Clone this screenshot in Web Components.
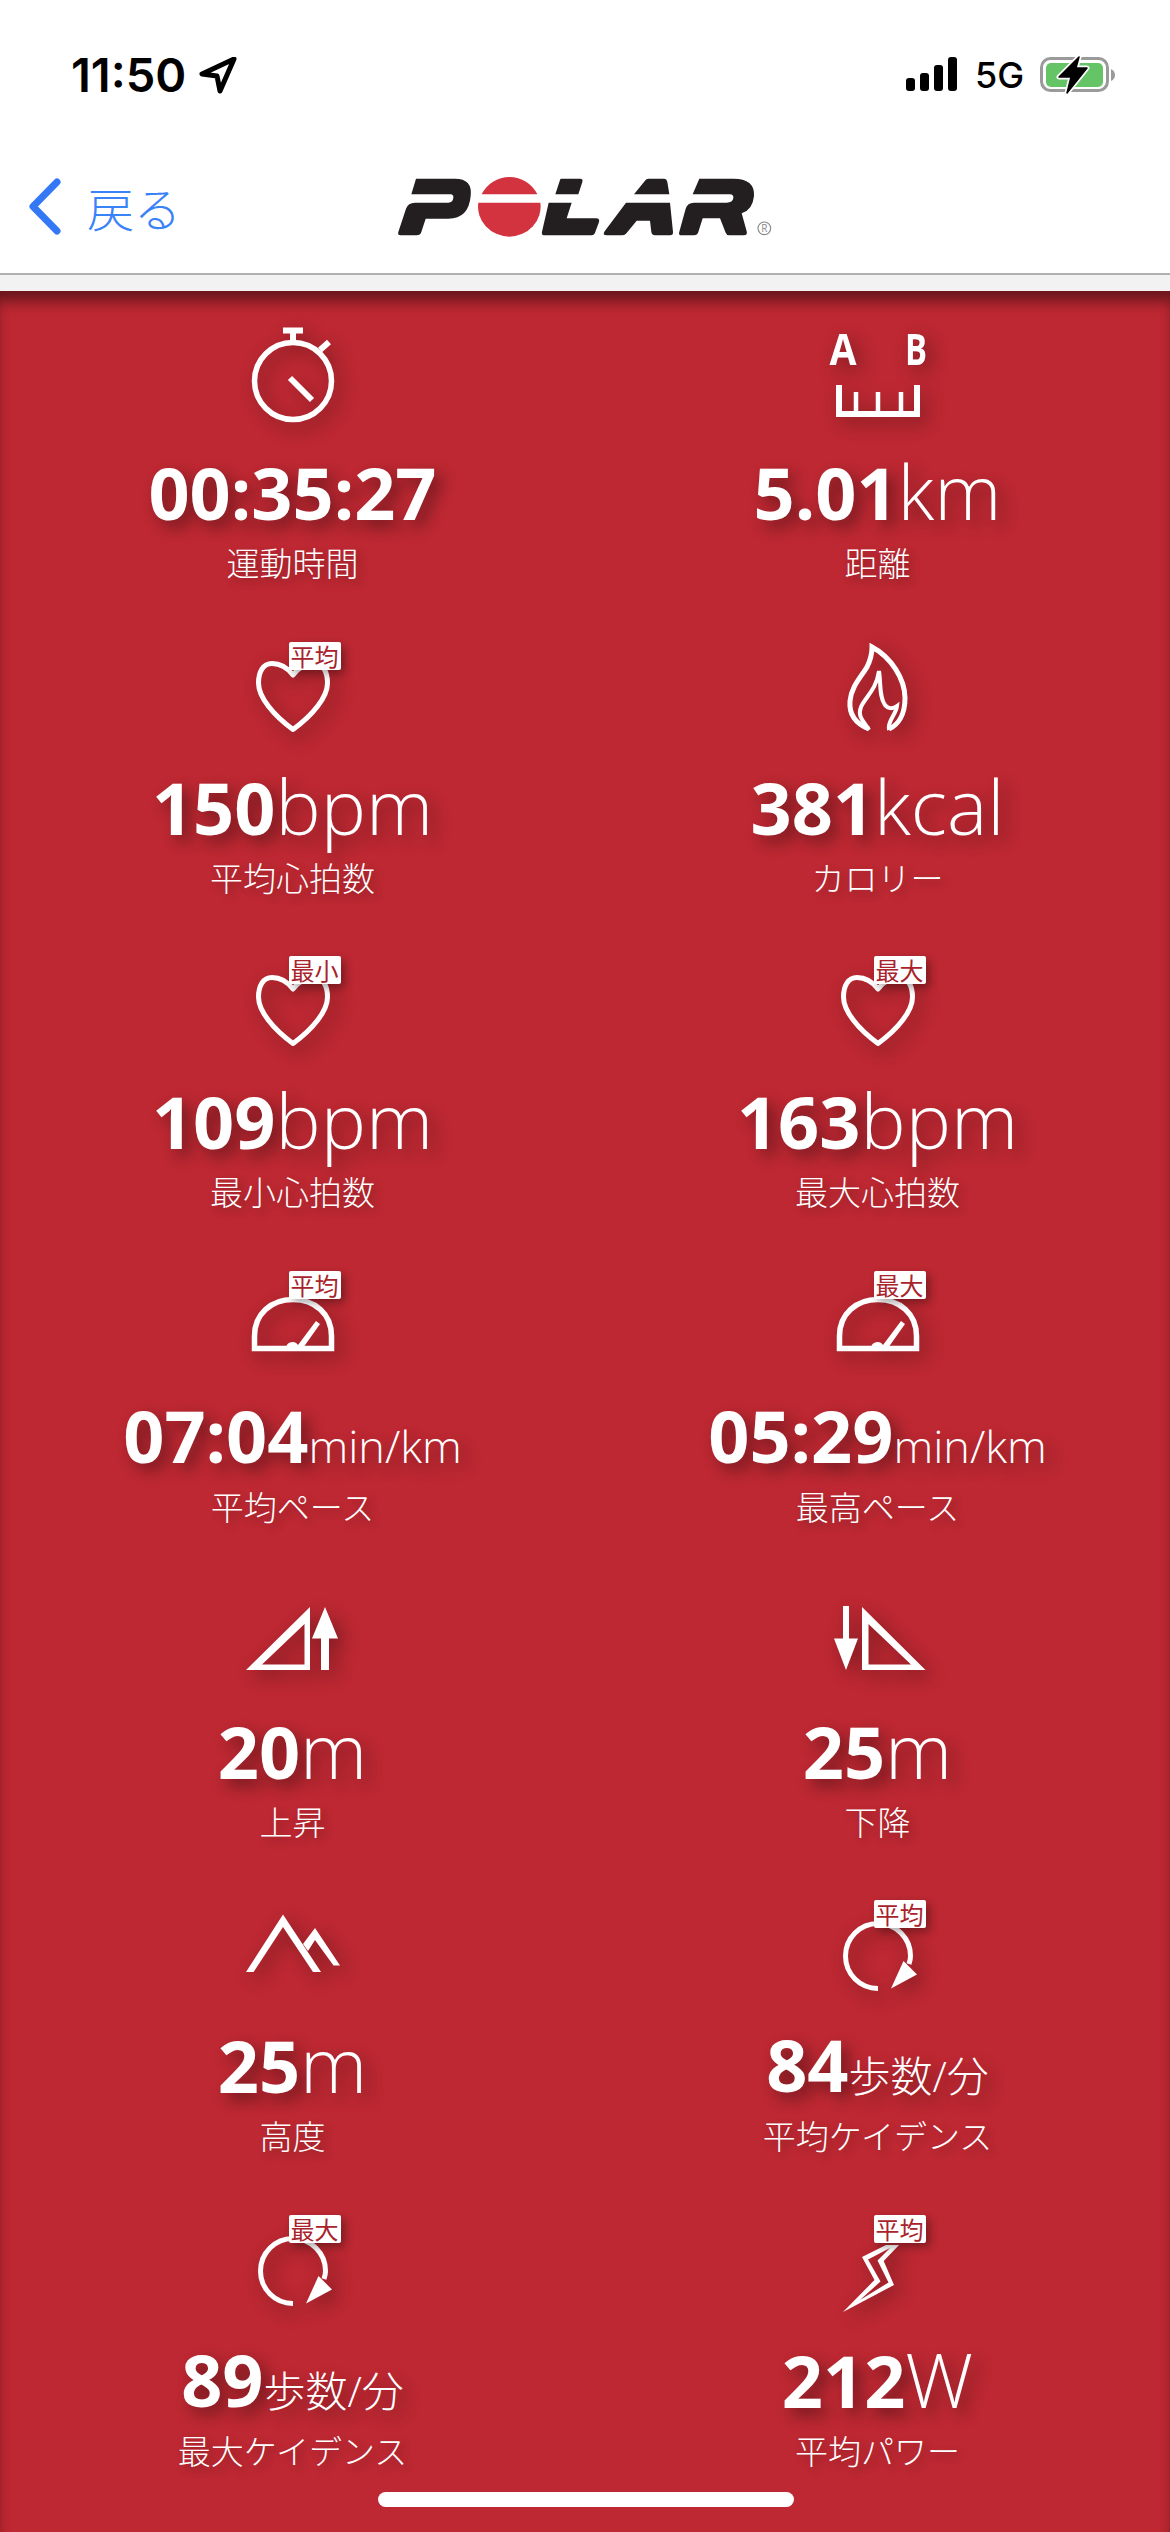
<!DOCTYPE html>
<html lang="ja"><head><meta charset="utf-8"><title>Polar</title>
<style>
html,body{margin:0;padding:0;background:#bd2832}
body{width:1170px;height:2532px;overflow:hidden;position:relative;font-family:"Open Sans","Noto Sans CJK JP",sans-serif}
stat-grid{height:2241px}
</style></head><body>
<app-header></app-header>
<stat-grid>
<stat-item num="00:35:27" label="運動時間"><stat-icon name="stopwatch"></stat-icon></stat-item>
<stat-item num="5.01" unit="km" label="距離"><stat-icon name="ruler"></stat-icon></stat-item>
<stat-item num="150" unit="bpm" label="平均心拍数"><stat-icon name="heart" badge="平均"></stat-icon></stat-item>
<stat-item num="381" unit="kcal" label="カロリー"><stat-icon name="flame"></stat-icon></stat-item>
<stat-item num="109" unit="bpm" label="最小心拍数"><stat-icon name="heart" badge="最小"></stat-icon></stat-item>
<stat-item num="163" unit="bpm" label="最大心拍数"><stat-icon name="heart" badge="最大"></stat-icon></stat-item>
<stat-item num="07:04" unit="min/km" small="latin" label="平均ペース"><stat-icon name="gauge" badge="平均"></stat-icon></stat-item>
<stat-item num="05:29" unit="min/km" small="latin" label="最高ペース"><stat-icon name="gauge" badge="最大"></stat-icon></stat-item>
<stat-item num="20" unit="m" label="上昇"><stat-icon name="up"></stat-icon></stat-item>
<stat-item num="25" unit="m" label="下降"><stat-icon name="down"></stat-icon></stat-item>
<stat-item num="25" unit="m" label="高度"><stat-icon name="mountain"></stat-icon></stat-item>
<stat-item num="84" unit="歩数/分" small="cjk" label="平均ケイデンス"><stat-icon name="cadence" badge="平均"></stat-icon></stat-item>
<stat-item num="89" unit="歩数/分" small="cjk" label="最大ケイデンス"><stat-icon name="cadence" badge="最大"></stat-icon></stat-item>
<stat-item num="212" unit="W" label="平均パワー"><stat-icon name="bolt" badge="平均"></stat-icon></stat-item>
</stat-grid>
<home-indicator></home-indicator>
<script>
const def=(n,html,extra)=>customElements.define(n,class extends HTMLElement{
  constructor(){super();this.attachShadow({mode:'open'}).innerHTML=html;}
  connectedCallback(){extra&&extra(this,this.shadowRoot);}
});
def('status-bar',`<style>
:host{display:flex;height:140px;box-sizing:border-box;padding:57px 55px 0 71px;align-items:flex-start;color:#000;font-family:Inter,"Liberation Sans",sans-serif}
.t{font-size:47px;font-weight:600;line-height:36px}
.a{margin-left:13px}
.r{margin-left:auto;display:flex;gap:18px;align-items:flex-start}
.g{font-size:36px;font-weight:500;line-height:36px;width:47px}
svg{display:block}
</style>
<span class="t">11:50</span>
<svg class="a" width="38" height="37" viewBox="0 0 38 37"><path d="M35 2 L3 17 L18 19 L21 34 Z" fill="#fff" stroke="#000" stroke-width="5" stroke-linejoin="round"/></svg>
<div class="r">
<svg width="51" height="35" viewBox="0 0 51 35"><rect x="0" y="21" width="9" height="13" rx="3"/><rect x="14" y="16" width="9" height="18" rx="3"/><rect x="28" y="8" width="9" height="26" rx="3"/><rect x="42" y="0" width="9" height="34" rx="3"/></svg>
<span class="g">5G</span>
<svg width="75" height="38" viewBox="0 0 75 38" style="margin-top:-1px"><rect x="1.500" y="2.500" width="66" height="32" rx="9" fill="none" stroke="#9a9a9a" stroke-width="3"/><rect x="6" y="7" width="57" height="24" rx="5" fill="#65c466"/><path d="M71 13 Q75 15 75 19 Q75 23 71 25 Z" fill="#9a9a9a"/><path d="M39 1 L19 21 H31 L27 37 L47 12 H36 Z" fill="#000" stroke="#fff" stroke-width="5" stroke-linejoin="round"/><path d="M39 1 L19 21 H31 L27 37 L47 12 H36 Z" fill="#000" stroke="#000" stroke-width="1.500" stroke-linejoin="round"/></svg>
</div>`);
def('polar-logo',`<style>:host{display:block;width:400px;height:90px;margin-top:-3px}svg{display:block}</style>
<svg width="400" height="90" viewBox="0 0 1200 270" role="img" aria-label="POLAR">
<g fill="#231f20">
<path d="M108 56H225Q278 56 272 108Q266 176 205 176H137L124 216Q121 226 110 226H62Q52 226 55 216L78 146Q84 128 105 128H205Q218 128 220 114Q221 103 212 103H94Z"/>
<path d="M544 56H600Q610 56 607 66L595 103H526L540 60Q541 56 544 56ZM506 128H575L560 175H648Q660 175 657 186L645 218Q642 226 632 226H495Q483 226 486 215Z"/>
<path d="M805 56H852Q860 56 862 66L868 103H762L795 62Q799 56 805 56ZM738 128H870L879 216Q880 226 870 226H825Q816 226 814 216L810 182H770L738 221Q733 226 725 226H680Q666 226 674 214Z"/>
<path d="M958 56H1060Q1125 56 1122 108Q1118 150 1085 160L1100 214Q1103 226 1092 226H1048Q1040 226 1037 218L1020 175H968L955 216Q952 226 942 226H905Q894 226 898 215L917 146Q922 128 942 128H1040Q1058 128 1060 114Q1061 103 1050 103H938Z"/>
</g>
<path d="M305 103A92 90 0 0 1 472 103Z" fill="#d3323f"/>
<path d="M295 128H481A95 90 0 0 1 388 230A95 90 0 0 1 295 128Z" fill="#d3323f"/>
<circle cx="1153" cy="205" r="19" fill="none" stroke="#8a8a8a" stroke-width="3.500"/>
<text x="1153" y="216" text-anchor="middle" font-family="Open Sans,sans-serif" font-size="30" fill="#8a8a8a">R</text>
</svg>`);
def('nav-bar',`<style>
:host{display:grid;grid-template-columns:380px auto;height:133px;align-items:center;background:#fff}
.b{display:flex;align-items:center;padding-left:28px;color:#3a82f7;font:300 47px "Noto Sans CJK JP",sans-serif;gap:26px}
svg{display:block}
</style>
<div class="b"><svg width="33" height="57" viewBox="0 0 33 57"><path d="M29 4 L5 28.500 L29 53" fill="none" stroke="#3478f6" stroke-width="7" stroke-linecap="round" stroke-linejoin="round"/></svg><span>戻る</span></div>
<polar-logo></polar-logo>`);
def('app-header',`<style>
:host{display:block;height:291px;background:#f2f2f2}
.w{background:#fff;border-bottom:2px solid #b0b0b0;height:273px}
</style><div class="w"><status-bar></status-bar><nav-bar></nav-bar></div>`);
def('stat-grid',`<style>
:host{display:grid;grid-template-columns:1fr 1fr;grid-auto-rows:314.67px;padding-top:19px;box-sizing:border-box;background:#bd2832;color:#fff;box-shadow:inset 0 14px 14px -4px rgba(0,0,0,.45)}
</style><slot></slot>`);
def('stat-badge',`<style>
:host{position:absolute;left:106px;top:17px;width:52px;height:28px;background:#fff;border-radius:2px;color:#a8232c;display:flex;align-items:center;justify-content:center;font:400 24px/28px "Noto Sans CJK JP",sans-serif;box-shadow:4px 4px 9px rgba(0,0,0,.33);white-space:nowrap}
</style><slot></slot>`);
const I={
stopwatch:`<circle cx="110" cy="71" r="38.500" fill="none" stroke="#fff" stroke-width="5.500"/><path d="M100 20.500H120M110 20.500V32M137 40L146 32M107 68L129 90" fill="none" stroke="#fff" stroke-width="6"/>`,
ruler:`<text x="75" y="55" text-anchor="middle" textLength="27" lengthAdjust="spacingAndGlyphs" font-family="Open Sans,sans-serif" font-weight="700" font-size="43" fill="#fff">A</text><text x="148" y="55" text-anchor="middle" textLength="22" lengthAdjust="spacingAndGlyphs" font-family="Open Sans,sans-serif" font-weight="700" font-size="43" fill="#fff">B</text><path d="M71 75V104H149V75" fill="none" stroke="#fff" stroke-width="6"/><path d="M88 82V102M110 82V102M133 82V102" fill="none" stroke="#fff" stroke-width="4.500"/>`,
heart:`<path d="M110 50C104 42 96 38.500 89 38.500C80 38.500 75.500 47 75.500 58C75.500 72 90 90 110 104.500C130 90 144.500 72 144.500 58C144.500 47 140 38.500 131 38.500C124 38.500 116 42 110 50Z" fill="none" stroke="#fff" stroke-width="5" stroke-linejoin="round"/>`,
flame:`<path d="M101 104C86 98 81 88 82 76C83 62 93 52 99 42C102 36 104 30 104 22C123 32 137 54 137 73C137 90 130 100 121 104" fill="none" stroke="#fff" stroke-width="5"/><path d="M101 105C96 96 89 92 93 82C97 72 108 66 111 46C113 58 111 72 117 80C120 84 125 84 129 81C128 90 119 96 121 105" fill="none" stroke="#fff" stroke-width="4"/>`,
gauge:`<path d="M71.500 94.500V82C71.500 60 88 45.500 110 45.500C132 45.500 148.500 60 148.500 82V94.500Z" fill="none" stroke="#fff" stroke-width="5.500"/><path d="M103 94A6.500 6.500 0 0 1 115 91L133 67L137 70L120 94Z" fill="#fff"/>`,
up:`<path fill="#fff" fill-rule="evenodd" d="M63 101H127V38ZM79 95.500H121.500V55Z"/><path fill="#fff" d="M142 38L155 69.500H146V101H138V69.500H129Z"/>`,
down:`<path fill="#fff" fill-rule="evenodd" d="M94 38V101H157.500ZM100.500 55V95.500H143Z"/><path fill="#fff" d="M75 37H81V69.500H90L78 101L66 69.500H75Z"/>`,
mountain:`<path fill="#fff" d="M63 89L100 31.500L138 89H130L100 44L70.600 89Z"/><path fill="#fff" d="M120 61L132 45L157 82.500H150.500L132 57L125 68Z"/>`,
cadence:`<path d="M110 105.500C92 105.500 77.500 91 77.500 73C77.500 55 92 40.500 110 40.500C128 40.500 142.500 55 142.500 73C142.500 76 142 78 141 81" fill="none" stroke="#fff" stroke-width="5"/><path fill="#fff" d="M123 105.500L149 91.500L135.500 78Z"/>`,
bolt:`<path fill="#fff" fill-rule="evenodd" d="M75 114L126 87L115.700 63L131 47H118L94 59L106.500 82ZM92 102L120.500 84.500L109.500 62.500L122 50L100 61.500L112.500 83.500Z"/>`
};
def('stat-icon',`<style>
:host{display:block;position:relative;width:220px;height:130px}
svg{display:block;filter:drop-shadow(6px 6px 9px rgba(0,0,0,.36))}
</style><svg width="220" height="130" viewBox="0 0 220 130"></svg>`,(el,root)=>{
  root.querySelector('svg').innerHTML=I[el.getAttribute('name')]||'';
  const b=el.getAttribute('badge');
  if(b){const s=document.createElement('stat-badge');s.textContent=b;root.appendChild(s);}
});
def('stat-item',`<style>
:host{display:flex;flex-direction:column;align-items:center;font-family:"Open Sans","Noto Sans CJK JP",sans-serif}
.v{height:102px;line-height:102px;font-size:72px;white-space:nowrap;text-shadow:7px 7px 15px rgba(0,0,0,.4)}
.n{font-weight:700}
.u{font-weight:300;font-size:76px}
:host([small=latin]) .u{font-size:45px}
:host([small=cjk]) .u{font-size:42px}
.l{height:40px;line-height:40px;font-size:33px;font-weight:300;font-family:"Noto Sans CJK JP",sans-serif;white-space:nowrap;text-shadow:4px 4px 9px rgba(0,0,0,.26)}
</style><slot></slot><div class="v"><span class="n"></span><span class="u"></span></div><div class="l"></div>`,(el,root)=>{
  root.querySelector('.n').textContent=el.getAttribute('num')||'';
  root.querySelector('.u').textContent=el.getAttribute('unit')||'';
  root.querySelector('.l').textContent=el.getAttribute('label')||'';
});
def('home-indicator',`<style>
:host{position:absolute;left:378px;top:2492px;width:416px;height:15px;border-radius:8px;background:#fff}
</style>`);
</script>
</body></html>
